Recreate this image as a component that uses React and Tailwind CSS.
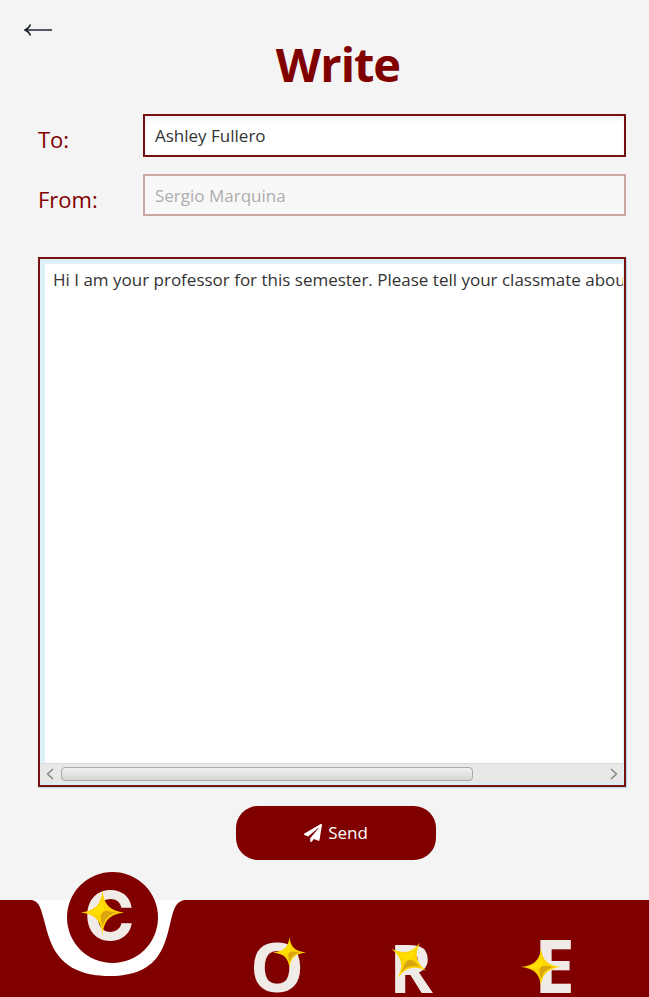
import React from 'react';
import { FaPaperPlane } from 'react-icons/fa';

const Star = ({ className }) => (
  <svg viewBox="0 0 44 44" preserveAspectRatio="none" className={`absolute ${className}`}>
    <path d="M22 0C23.500 13 28 20 44 22C28 24 23.500 31 22 44C20.500 31 16 24 0 22C16 20 20.500 13 22 0Z" fill="#ffd500" />
    <path d="M22 7C23 15 25 19 22 22C19 25 15 23 7 22C15 21 21 15 22 7Z" fill="#ffe000" />
    <path d="M22 22C25 19 29 21 37 22C29 23 23 29 22 37C21 29 19 25 22 22Z" fill="#dba510" />
  </svg>
);

const Letter = ({ children, className, starClassName }) => (
  <div className={`relative font-bold text-[#f0ebe6] ${className}`}>
    {children}
    <Star className={starClassName} />
  </div>
);

const App = () => {
  return (
    <div className="w-[649px] h-[997px] flex flex-col overflow-hidden bg-[#f4f4f4] font-['Open_Sans',sans-serif]">
      {/* Back arrow */}
      <div className="h-[36px] pt-[24px] pl-[24px]">
        <svg width="28" height="12" viewBox="0 0 28 12" fill="none" stroke="#1f2430" strokeWidth="1.600">
          <path d="M1 6H28M6.500 0.500C5.500 3 3.500 5 1 6C3.500 7 5.500 9 6.500 11.500" />
        </svg>
      </div>

      <main className="flex flex-col pl-[38px] pr-[23px]">
        <h1 className="pl-[12px] text-center text-[47px] leading-[56px] font-bold tracking-[-1px] text-[#800000]">Write</h1>

        {/* Recipient fields */}
        <div className="mt-[22px] flex flex-col gap-[17px]">
          <div className="flex items-end">
            <label className="w-[105px] text-[22px] leading-[34px] text-[#800000] mb-[1px]">To:</label>
            <div className="flex-1 h-[43px] flex items-center px-[10px] border-2 border-[#74100f] bg-white text-[17px] text-[#333333] shadow-[inset_0_3px_4px_#f0f0f0]">
              Ashley Fullero
            </div>
          </div>
          <div className="flex items-end">
            <label className="w-[105px] text-[22px] leading-[34px] text-[#800000]">From:</label>
            <div className="flex-1 h-[42px] flex items-center px-[10px] pt-[1px] border-2 border-[#cba6a3] bg-[#f8f8f8] text-[17px] text-[#adadad]">
              Sergio Marquina
            </div>
          </div>
        </div>

        {/* Message box */}
        <div className="mt-[41px] h-[530px] flex flex-col border-2 border-[#7a1010] bg-[#dcf0f8] pt-[5px] pl-[5px] pr-[1px] pb-[2px] shadow-[1px_1px_1px_#b8dcec]">
          <div className="flex-1 min-h-0 bg-white pl-[8px] pt-[4px] overflow-hidden whitespace-nowrap text-[17px] leading-[24px] text-[#333333]">
            Hi I am your professor for this semester. Please tell your classmate about
          </div>
          <div className="h-[20px] -ml-[5px] pl-[5px] flex items-center gap-[7px] bg-[#e8e8e8] border-t border-[#dcdcdc]">
            <svg width="8" height="12" viewBox="0 0 8 12" fill="none" stroke="#7d7d7d" strokeWidth="1.300" className="ml-[1px]">
              <path d="M7 1L1.500 6L7 11" />
            </svg>
            <div className="w-[412px] h-[14px] rounded-[4px] border border-[#a9a9a9] bg-gradient-to-b from-[#f0f0f0] to-[#d6d6d6]"></div>
            <svg width="8" height="12" viewBox="0 0 8 12" fill="none" stroke="#7d7d7d" strokeWidth="1.300" className="ml-auto mr-[5px]">
              <path d="M1 1L6.500 6L1 11" />
            </svg>
          </div>
        </div>

        <button className="mt-[19px] ml-[198px] w-[200px] h-[54px] flex items-center justify-center gap-[6px] rounded-[22px] bg-[#800000] text-[17px] text-white">
          <FaPaperPlane className="w-[18px] h-[18px]" />
          Send
        </button>
      </main>

      {/* Footer with logo */}
      <footer className="relative mt-[40px] h-[97px] flex items-start bg-[#800000]">
        <svg width="220" height="80" viewBox="0 0 220 80" className="absolute left-0 top-0">
          <path d="M32 0C40 2 41 10 44 20C50 42 56 76 110 76C160 76 165 45 171 20C174 8 176 2 184 0Z" fill="#ffffff" />
        </svg>
        <div className="absolute left-[67px] -top-[28px] w-[91px] h-[91px] rounded-full bg-[#800000] flex items-center justify-center">
          <Letter className="font-['Inter',sans-serif] text-[68px] leading-[72px] -ml-[6px] -mt-[5px]" starClassName="-left-[3px] top-[11px] w-[43px] h-[45px]">C</Letter>
        </div>
        <Letter className="ml-[250px] mt-[38px] text-[68px] leading-[56px]" starClassName="left-[23px] -top-[1px] w-[33px] h-[31px]">O</Letter>
        <Letter className="ml-[85px] mt-[39px] text-[66px] leading-[56px]" starClassName="-left-[1px] top-0 w-[42px] h-[42px] rotate-[32deg]">R</Letter>
        <Letter className="ml-[101px] mt-[37px] text-[74px] leading-[56px]" starClassName="-left-[13px] top-[11px] w-[40px] h-[38px]">E</Letter>
      </footer>
    </div>
  );
};

export default App;
